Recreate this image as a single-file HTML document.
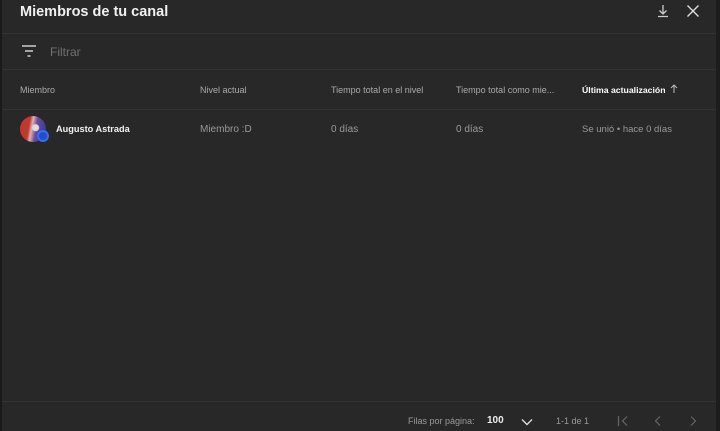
<!DOCTYPE html>
<html><head><meta charset="utf-8"><style>
*{margin:0;padding:0;box-sizing:border-box}
body{width:720px;height:431px;background:#282828;font-family:"Liberation Sans",sans-serif;position:relative;overflow:hidden;color:#aaa}
.edge{position:absolute;left:0;top:0;width:2px;height:431px;background:#1a1a1a}
.edgeR{position:absolute;right:0;top:0;width:4px;height:431px;background:#1c1c1c}
.line{position:absolute;left:2px;right:4px;height:1px;background:#333}
.t{position:absolute;white-space:nowrap}
</style></head><body>
<div class="edge"></div><div class="edgeR"></div>
<div class="t" style="left:20px;top:3px;font-size:14.5px;font-weight:bold;color:#f1f1f1;line-height:18px">Miembros de tu canal</div>
<svg style="position:absolute;left:656px;top:4px" width="14" height="14" viewBox="0 0 14 14" fill="none" stroke="#ccc" stroke-width="1.3"><path d="M7 1v9M3.5 6.5L7 10l3.5-3.5M2 12.5h10"/></svg>
<svg style="position:absolute;left:686px;top:4px" width="14" height="14" viewBox="0 0 14 14" stroke="#ddd" stroke-width="1.4"><path d="M1.5 1.5l11 11M12.5 1.5l-11 11"/></svg>
<div class="line" style="top:33px"></div>
<svg style="position:absolute;left:22px;top:45px" width="14" height="12" viewBox="0 0 14 12" stroke="#ccc" stroke-width="1.4"><path d="M0 1h14M3 6h8M5.5 11h3"/></svg>
<div class="t" style="left:50px;top:45px;font-size:12px;color:#717171">Filtrar</div>
<div class="line" style="top:69px"></div>
<div class="t" style="left:20px;top:85px;font-size:9px;color:#aaa">Miembro</div>
<div class="t" style="left:200px;top:85px;font-size:9px;color:#aaa">Nivel actual</div>
<div class="t" style="left:331px;top:85px;font-size:9px;color:#aaa">Tiempo total en el nivel</div>
<div class="t" style="left:456px;top:85px;font-size:9px;color:#aaa">Tiempo total como mie...</div>
<div class="t" style="left:582px;top:85px;font-size:8.7px;font-weight:bold;color:#fff">Última actualización</div>
<svg style="position:absolute;left:669px;top:84px" width="10" height="10" viewBox="0 0 10 10" fill="none" stroke="#bbb" stroke-width="1"><path d="M5 9V1M2 4l3-3 3 3"/></svg>
<div class="line" style="top:109px"></div>
<div style="position:absolute;left:20px;top:116px;width:26px;height:26px;border-radius:50%;background:radial-gradient(circle at 60% 45%,#ddd 0 3px,transparent 4px),linear-gradient(100deg,#c0392b 0 35%,#e0b0b0 45%,#6a4a9a 60%,#2a3a9a)"></div>
<div style="position:absolute;left:37px;top:130px;width:12px;height:12px;border-radius:50%;background:#1f4fd0;border:2px solid #3b6df0"></div>
<div class="t" style="left:56px;top:124px;font-size:9.2px;font-weight:bold;color:#f1f1f1">Augusto Astrada</div>
<div class="t" style="left:200px;top:124px;font-size:10px;color:#999">Miembro :D</div>
<div class="t" style="left:331px;top:124px;font-size:10px;color:#999">0 días</div>
<div class="t" style="left:456px;top:124px;font-size:10px;color:#999">0 días</div>
<div class="t" style="left:582px;top:124px;font-size:9.5px;color:#999">Se unió • hace 0 días</div>
<div class="line" style="top:401px"></div>
<div class="t" style="left:408px;top:416px;font-size:9px;color:#999">Filas por página:</div>
<div class="t" style="left:487px;top:415px;font-size:10px;font-weight:bold;color:#eee">100</div>
<svg style="position:absolute;left:521px;top:418px" width="12" height="8" viewBox="0 0 12 8" fill="none" stroke="#ddd" stroke-width="1.4"><path d="M1 1.5l5 5 5-5"/></svg>
<div class="t" style="left:556px;top:416px;font-size:9px;color:#999">1-1 de 1</div>
<svg style="position:absolute;left:617px;top:415px" width="12" height="12" viewBox="0 0 12 12" fill="none" stroke="#666" stroke-width="1.2"><path d="M1.5 1v10M10 1.5L5.5 6l4.5 4.5"/></svg>
<svg style="position:absolute;left:653px;top:415px" width="10" height="12" viewBox="0 0 10 12" fill="none" stroke="#666" stroke-width="1.2"><path d="M7 1.5L2.5 6 7 10.5"/></svg>
<svg style="position:absolute;left:688px;top:415px" width="10" height="12" viewBox="0 0 10 12" fill="none" stroke="#666" stroke-width="1.2"><path d="M3 1.5L7.5 6 3 10.5"/></svg>
</body></html>
